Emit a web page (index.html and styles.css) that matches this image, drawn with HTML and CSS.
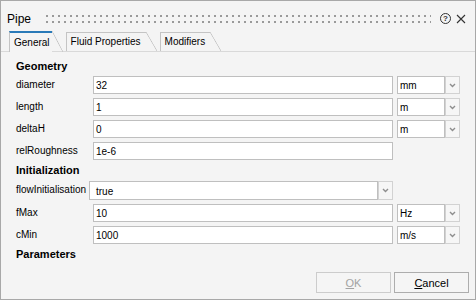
FILE: index.html
```html
<!DOCTYPE html>
<html lang="en">
  <head>
    <meta charset="UTF-8" />
    <meta name="viewport" content="width=device-width, initial-scale=1.0" />
    <title>Pipe</title>
    <link rel="stylesheet" href="styles.css">
  </head>
  <body>
    <div class="dialog">
      <div class="titlebar">
        <span class="title">Pipe</span>
        <span class="grip"></span>
        <span class="help">?</span>
        <svg class="close" width="10" height="10" viewBox="0 0 10 10">
          <path d="M1 1 L9 9 M9 1 L1 9" stroke="#333" stroke-width="1.1" fill="none" />
        </svg>
      </div>

      <div class="tabs">
        <div class="tab active"><span class="tab-label">General</span></div>
        <div class="tab"><span class="tab-label">Fluid Properties</span></div>
        <div class="tab"><span class="tab-label">Modifiers</span></div>
      </div>

      <div class="pane">
        <div class="section">Geometry</div>
        <div class="row">
          <span class="label">diameter</span>
          <div class="field">32</div>
          <div class="combo"><div class="combo-text">mm</div><div class="combo-btn"><svg width="7" height="5" viewBox="0 0 7 5"><path d="M1 1 L3.5 3.5 L6 1" stroke="#8e8e8e" stroke-width="1.4" fill="none" /></svg></div></div>
        </div>
        <div class="row">
          <span class="label">length</span>
          <div class="field">1</div>
          <div class="combo"><div class="combo-text">m</div><div class="combo-btn"><svg width="7" height="5" viewBox="0 0 7 5"><path d="M1 1 L3.5 3.5 L6 1" stroke="#8e8e8e" stroke-width="1.4" fill="none" /></svg></div></div>
        </div>
        <div class="row">
          <span class="label">deltaH</span>
          <div class="field">0</div>
          <div class="combo"><div class="combo-text">m</div><div class="combo-btn"><svg width="7" height="5" viewBox="0 0 7 5"><path d="M1 1 L3.5 3.5 L6 1" stroke="#8e8e8e" stroke-width="1.4" fill="none" /></svg></div></div>
        </div>
        <div class="row">
          <span class="label">relRoughness</span>
          <div class="field">1e-6</div>
        </div>

        <div class="section">Initialization</div>
        <div class="row row-combo">
          <span class="label">flowInitialisation</span>
          <div class="combo combo-wide"><div class="combo-text">true</div><div class="combo-btn"><svg width="7" height="5" viewBox="0 0 7 5"><path d="M1 1 L3.5 3.5 L6 1" stroke="#8e8e8e" stroke-width="1.4" fill="none" /></svg></div></div>
        </div>
        <div class="row">
          <span class="label">fMax</span>
          <div class="field">10</div>
          <div class="combo"><div class="combo-text">Hz</div><div class="combo-btn"><svg width="7" height="5" viewBox="0 0 7 5"><path d="M1 1 L3.5 3.5 L6 1" stroke="#8e8e8e" stroke-width="1.4" fill="none" /></svg></div></div>
        </div>
        <div class="row">
          <span class="label">cMin</span>
          <div class="field">1000</div>
          <div class="combo"><div class="combo-text">m/s</div><div class="combo-btn"><svg width="7" height="5" viewBox="0 0 7 5"><path d="M1 1 L3.5 3.5 L6 1" stroke="#8e8e8e" stroke-width="1.4" fill="none" /></svg></div></div>
        </div>

        <div class="section">Parameters</div>
      </div>

      <div class="buttons">
        <button class="btn" disabled><u>O</u>K</button>
        <button class="btn"><u>C</u>ancel</button>
      </div>
    </div>
  </body>
</html>
```

FILE: styles.css
```css
* {
  box-sizing: border-box;
}
body {
  margin: 0;
  font-family: "Liberation Sans", Arial, sans-serif;
  color: #000;
}
.dialog {
  width: 476px;
  height: 300px;
  display: flex;
  flex-direction: column;
  background-color: #f4f4f4;
  border: 1px solid #a8a8a8;
}

/* title bar */
.titlebar {
  display: flex;
  align-items: center;
  height: 30px;
  padding: 5px 9px 0 6px;
}
.title {
  font-size: 12px;
  line-height: 14px;
}
.grip {
  flex: 1;
  height: 8px;
  margin: 0 9px 0 15px;
  background-image:
    linear-gradient(to bottom, transparent 2px, #f4f4f4 2px, #f4f4f4 6px, transparent 6px),
    linear-gradient(to right, #9a9a9a 2px, transparent 2px);
  background-size: 6px 8px, 6px 8px;
}
.help {
  width: 11px;
  height: 11px;
  margin-right: 5px;
  border: 1px solid #333;
  border-radius: 50%;
  font-size: 8px;
  font-weight: bold;
  line-height: 9px;
  text-align: center;
  color: #333;
}
.close {
  display: block;
}

/* tabs */
.tabs {
  display: flex;
  align-items: flex-end;
  height: 21px;
  padding-left: 8px;
  border-bottom: 1px solid #d9d9d9;
}
.tab {
  position: relative;
  display: flex;
  height: 19px;
  margin-right: 3px;
  padding-right: 11px;
  font-size: 10px;
}
.tab::after {
  content: '';
  position: absolute;
  top: 0;
  right: 0;
  bottom: 0;
  width: 11px;
  background: linear-gradient(to top right, transparent calc(50% - 0.7px), #c4c4c4 50%, transparent calc(50% + 0.7px));
}
.tab-label {
  padding: 0 5px 0 4px;
  line-height: 18px;
  border-left: 1px solid #c4c4c4;
  border-top: 1px solid #c4c4c4;
}
.tab.active {
  height: 21px;
  margin-bottom: -1px;
}
.tab.active .tab-label {
  padding-right: 2px;
  border-top: 2px solid #2a7ab8;
  background-color: #f4f4f4;
  line-height: 19px;
}

/* form */
.pane {
  padding: 7px 0 0 15px;
}
.section {
  height: 14px;
  margin: 3px 0 -1px;
  font-size: 11px;
  font-weight: bold;
  line-height: 14px;
}
.section:first-child {
  margin-top: 0;
}
.row {
  display: grid;
  grid-template-columns: 73px 300px 63px;
  column-gap: 4px;
  height: 18px;
  margin-top: 4px;
  font-size: 10px;
}
.row-combo {
  height: 19px;
  margin-top: 5px;
  margin-bottom: 1px;
}
.label {
  line-height: 18px;
  white-space: nowrap;
}
.field {
  height: 18px;
  padding: 1px 0 0 2px;
  line-height: 15px;
  background-color: #fff;
  border: 1px solid #bfbfbf;
}
.combo {
  display: flex;
  height: 18px;
}
.combo-text {
  flex: 1;
  padding: 1px 0 0 2px;
  line-height: 15px;
  background-color: #fff;
  border: 1px solid #bfbfbf;
}
.combo-btn {
  display: flex;
  align-items: center;
  justify-content: center;
  width: 15px;
  background-color: #f6f6f6;
  border: 1px solid #d2d2d2;
}
.combo-wide {
  height: 19px;
  margin-left: -4px;
}
.combo-wide .combo-text {
  padding: 2px 0 0 6px;
}

/* dialog buttons */
.buttons {
  display: flex;
  justify-content: flex-end;
  gap: 3px;
  margin-top: auto;
  padding: 0 6px 6px 0;
}
.btn {
  width: 75px;
  height: 21px;
  padding: 0;
  font-family: "Liberation Sans", Arial, sans-serif;
  font-size: 11px;
  color: #000;
  background-color: #f5f5f5;
  border: 1px solid #adadad;
}
.btn:disabled {
  color: #a3a3a3;
  border-color: #cccccc;
}
```
